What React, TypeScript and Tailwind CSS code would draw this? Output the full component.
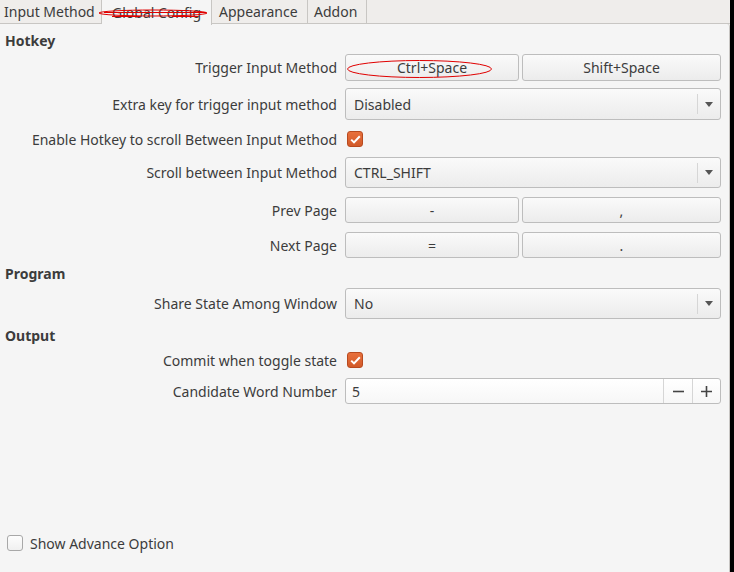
import React from "react";

const FONT = { fontFamily: '"Noto Sans", "Open Sans", sans-serif' };

function Label({ children }: { children: React.ReactNode }) {
  return (
    <div className="w-[337px] shrink-0 text-right text-[14px] text-[#3c3c3c] whitespace-nowrap">
      {children}
    </div>
  );
}

function Btn({ children, className = "" }: { children: React.ReactNode; className?: string }) {
  return (
    <div
      className={
        "flex h-full items-center justify-center rounded-[3px] border border-[#bdbdbd] bg-gradient-to-b from-[#fafafa] to-[#ececec] text-[14px] text-[#3c3c3c] " +
        className
      }
    >
      {children}
    </div>
  );
}

function Combo({ value }: { value: string }) {
  return (
    <div className="flex h-full w-[376px] items-center rounded-[3px] border border-[#bdbdbd] bg-gradient-to-b from-[#fafafa] to-[#ececec] text-[14px] text-[#3c3c3c]">
      <span className="flex-1 pl-[8px]">{value}</span>
      <div className="flex h-[20px] w-[23px] items-center justify-center border-l border-[#d6d6d6]">
        <svg width="8" height="5" viewBox="0 0 8 5">
          <path d="M0 0h8L4 5z" fill="#555" />
        </svg>
      </div>
    </div>
  );
}

function Check({ checked }: { checked: boolean }) {
  return checked ? (
    <div className="flex h-[16px] w-[16px] items-center justify-center rounded-[3px] border border-[#b84a1f] bg-gradient-to-b from-[#e8703c] to-[#d25a29]">
      <svg width="11" height="9" viewBox="0 0 11 9">
        <path d="M1.2 4.6l2.8 2.8 5.8-6.2" fill="none" stroke="#fff" strokeWidth="2" />
      </svg>
    </div>
  ) : (
    <div className="h-[16px] w-[16px] rounded-[3px] border border-[#a8a8a8] bg-gradient-to-b from-[#fdfdfd] to-[#f0f0f0]" />
  );
}

function Row({ label, h, mt, children }: { label: string; h: string; mt: string; children: React.ReactNode }) {
  return (
    <div className={"flex items-center gap-[8px] " + h + " " + mt}>
      <Label>{label}</Label>
      {children}
    </div>
  );
}

function Heading({ children, mt }: { children: React.ReactNode; mt: string }) {
  return (
    <div className={"flex h-[18px] items-center pl-[5px] text-[14px] font-bold text-[#3c3c3c] " + mt}>
      {children}
    </div>
  );
}

export default function App() {
  return (
    <div className="relative flex h-[572px] w-[734px] bg-black" style={FONT}>
      <div className="flex w-[730px] flex-col bg-[#efedeb]">
        {/* tabs */}
        <div className="flex h-[24px] items-end text-[14px] text-[#3c3c3c]">
          <div className="flex h-[24px] w-[102px] items-center border-r border-b border-[#c8c6c3] pl-[4px]">Input Method</div>
          <div className="z-10 -mb-px flex h-[25px] w-[110px] items-center self-start border-r border-[#c8c6c3] bg-[#f5f5f5] pl-[10px]">
            Global Config
          </div>
          <div className="flex h-[24px] w-[96px] items-center border-r border-b border-[#c8c6c3] pl-[7px]">Appearance</div>
          <div className="flex h-[24px] w-[59px] items-center border-r border-b border-[#c8c6c3] pl-[6px]">Addon</div>
          <div className="h-[24px] flex-1 border-b border-[#c8c6c3]" />
        </div>
        {/* page */}
        <div className="flex flex-1 flex-col rounded-tr-[3px] border-r border-[#c8c6c3] bg-[#f5f5f5]">
          <Heading mt="mt-[7px]">Hotkey</Heading>
          <Row label="Trigger Input Method" h="h-[27px]" mt="mt-[5px]">
            <div className="flex h-full w-[376px] gap-[3px]">
              <Btn className="w-[174px]">Ctrl+Space</Btn>
              <Btn className="flex-1">Shift+Space</Btn>
            </div>
          </Row>
          <Row label="Extra key for trigger input method" h="h-[32px]" mt="mt-[7px]">
            <Combo value="Disabled" />
          </Row>
          <Row label="Enable Hotkey to scroll Between Input Method" h="h-[22px]" mt="mt-[8px]">
            <div className="pl-[2px]">
              <Check checked />
            </div>
          </Row>
          <Row label="Scroll between Input Method" h="h-[31px]" mt="mt-[7px]">
            <Combo value="CTRL_SHIFT" />
          </Row>
          <Row label="Prev Page" h="h-[26px]" mt="mt-[9px]">
            <div className="flex h-full w-[376px] gap-[3px]">
              <Btn className="w-[174px]">-</Btn>
              <Btn className="flex-1">,</Btn>
            </div>
          </Row>
          <Row label="Next Page" h="h-[26px]" mt="mt-[9px]">
            <div className="flex h-full w-[376px] gap-[3px]">
              <Btn className="w-[174px]">=</Btn>
              <Btn className="flex-1">.</Btn>
            </div>
          </Row>
          <Heading mt="mt-[6px]">Program</Heading>
          <Row label="Share State Among Window" h="h-[31px]" mt="mt-[6px]">
            <Combo value="No" />
          </Row>
          <Heading mt="mt-[7px]">Output</Heading>
          <Row label="Commit when toggle state" h="h-[22px]" mt="mt-[5px]">
            <div className="pl-[2px]">
              <Check checked />
            </div>
          </Row>
          <Row label="Candidate Word Number" h="h-[26px]" mt="mt-[7px]">
            <div className="flex h-full w-[376px] items-center rounded-[3px] border border-[#bdbdbd] bg-gradient-to-b from-[#ffffff] to-[#f7f7f7] text-[14px] text-[#3c3c3c]">
              <span className="flex-1 pl-[6px]">5</span>
              <div className="flex h-full w-[29px] items-center justify-center border-l border-[#d6d6d6]">
                <svg width="11" height="11" viewBox="0 0 11 11">
                  <path d="M0 5.5h11" stroke="#444" strokeWidth="1.6" />
                </svg>
              </div>
              <div className="flex h-full w-[28px] items-center justify-center border-l border-[#d6d6d6]">
                <svg width="11" height="11" viewBox="0 0 11 11">
                  <path d="M0 5.5h11M5.5 0v11" stroke="#444" strokeWidth="1.6" />
                </svg>
              </div>
            </div>
          </Row>
          <div className="mt-auto mb-[18px] flex h-[22px] items-center gap-[7px] pl-[7px] text-[14px] text-[#3c3c3c]">
            <Check checked={false} />
            <span>Show Advance Option</span>
          </div>
        </div>
      </div>
      {/* red annotations drawn on top of the screenshot */}
      <svg className="pointer-events-none absolute left-0 top-0 z-20" width="734" height="572">
        <ellipse cx="153" cy="13" rx="54" ry="3" fill="none" stroke="#e00000" strokeWidth="1" />
        <path d="M104 12.5H206M112 16.5h28M172 16.5h26" stroke="#e00000" strokeWidth="1" />
        <ellipse cx="419.5" cy="69" rx="72" ry="8.5" fill="none" stroke="#e00000" strokeWidth="1" />
      </svg>
    </div>
  );
}
